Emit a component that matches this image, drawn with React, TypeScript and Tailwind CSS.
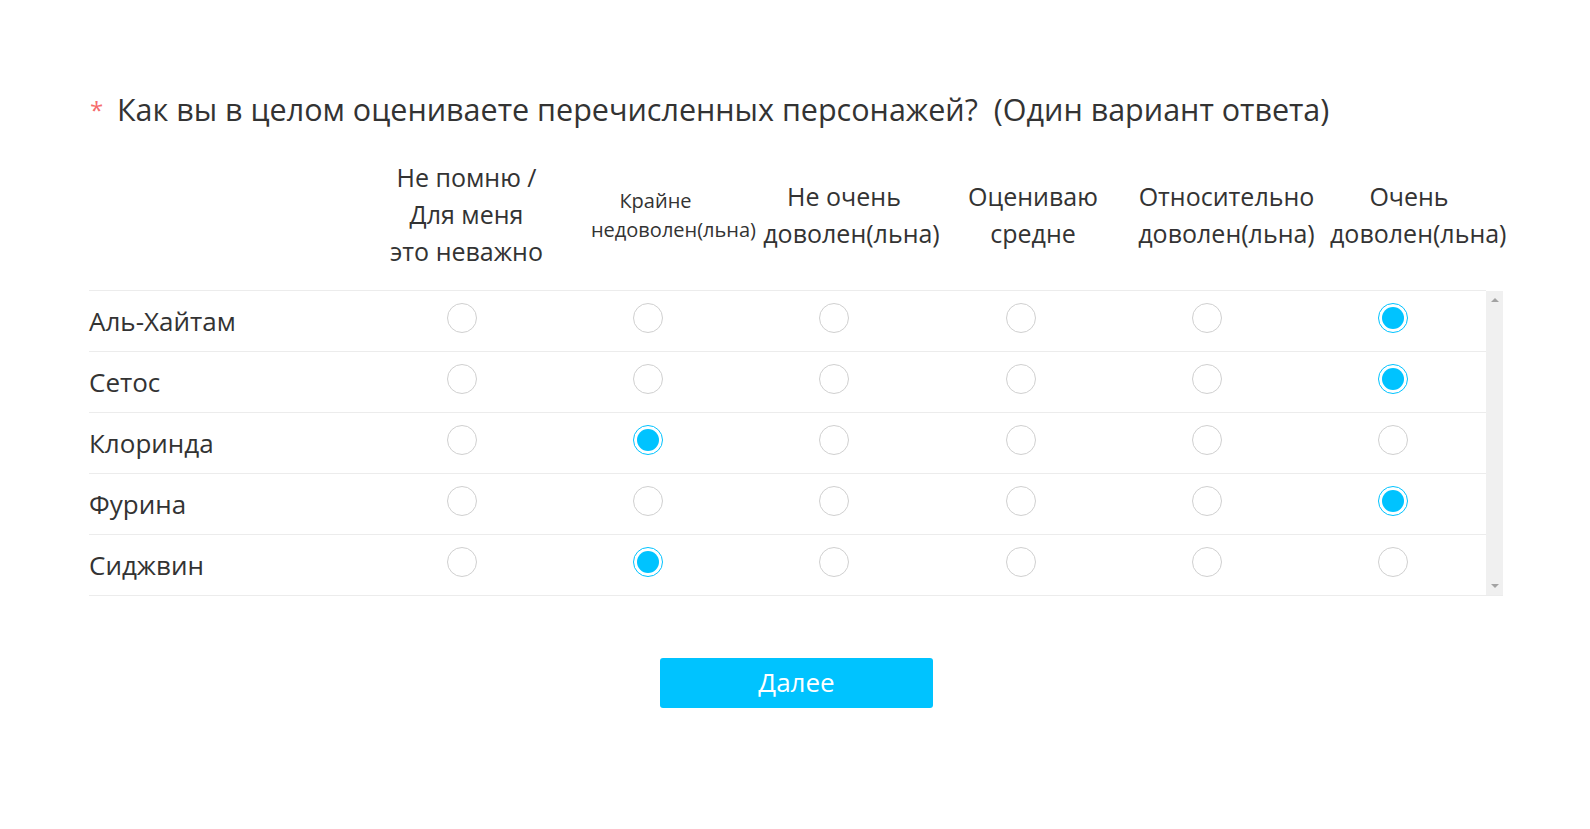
import React, { useState } from 'react';

const big = 'text-[25px] leading-[37px]';

const columns: { w: string; label: React.ReactNode }[] = [
  {
    w: 'w-[203px] pr-[2px]',
    label: (
      <div className={big}>
        <div>Не помню /</div>
        <div>Для меня</div>
        <div>это неважно</div>
      </div>
    ),
  },
  {
    w: 'w-[193px] pl-[16px]',
    label: (
      <div className="text-[20px] leading-[29px]">
        <div className="pr-[36px]">Крайне</div>
        <div>недоволен(льна)</div>
      </div>
    ),
  },
  {
    w: 'w-[179px]',
    label: (
      <div className={big}>
        <div className="pr-[15px]">Не очень</div>
        <div>доволен(льна)</div>
      </div>
    ),
  },
  {
    w: 'w-[188px] pr-[4px]',
    label: (
      <div className={big}>
        <div>Оцениваю</div>
        <div>средне</div>
      </div>
    ),
  },
  {
    w: 'w-[193px] pl-[2px]',
    label: (
      <div className={big}>
        <div>Относительно</div>
        <div>доволен(льна)</div>
      </div>
    ),
  },
  {
    w: 'w-[181px] pl-[8px]',
    label: (
      <div className={big}>
        <div className="pr-[15px]">Очень</div>
        <div>доволен(льна)</div>
      </div>
    ),
  },
];

const initialRows = [
  { name: 'Аль-Хайтам', value: 5 },
  { name: 'Сетос', value: 5 },
  { name: 'Клоринда', value: 1 },
  { name: 'Фурина', value: 5 },
  { name: 'Сиджвин', value: 1 },
];

const Radio: React.FC<{ checked: boolean; onClick: () => void }> = ({ checked, onClick }) => (
  <button
    onClick={onClick}
    className={
      checked
        ? 'w-[30px] h-[30px] rounded-full border border-[#00c3ff] bg-white flex items-center justify-center'
        : 'w-[30px] h-[30px] rounded-full border border-[#d0d0d0] bg-white'
    }
  >
    {checked && <span className="block w-[22px] h-[22px] rounded-full bg-[#00c3ff]" />}
  </button>
);

export default function App() {
  const [rows, setRows] = useState(initialRows);

  const pick = (i: number, v: number) =>
    setRows((r) => r.map((row, idx) => (idx === i ? { ...row, value: v } : row)));

  return (
    <div
      className="min-h-screen bg-white text-[#333]"
      style={{ fontFamily: '"Open Sans", "Noto Sans", sans-serif' }}
    >
      <div className="w-[1414px] ml-[89px] pt-[87px]">
        <h1 className="flex items-center text-[30.5px] leading-[45px] font-normal">
          <span className="text-[#f56c6c] text-[24px] w-[28px] pl-[1px]">*</span>
          <span>Как вы в целом оцениваете перечисленных персонажей?&nbsp; (Один вариант ответа)</span>
        </h1>

        <div className="mt-[7px] flex h-[151px] items-center">
          <div className="w-[277px] shrink-0" />
          {columns.map((c, i) => (
            <div key={i} className={`${c.w} shrink-0 text-center whitespace-nowrap`}>
              {c.label}
            </div>
          ))}
        </div>

        <div className="flex border-b border-[#ececec]">
          <div className="flex-1">
            {rows.map((row, i) => (
              <div
                key={row.name}
                className="flex h-[61px] items-center border-t border-[#ececec]"
              >
                <div className="w-[280px] text-[26px]">{row.name}</div>
                {columns.map((_, v) => (
                  <div key={v} className="w-[186.2px] flex justify-center -translate-y-[3px]">
                    <Radio checked={row.value === v} onClick={() => pick(i, v)} />
                  </div>
                ))}
              </div>
            ))}
          </div>
          <div className="w-[17px] bg-[#f0f0f0] mt-[1px] flex flex-col items-center justify-between py-[7px]">
            <span className="w-0 h-0 border-l-[4px] border-r-[4px] border-b-[4px] border-l-transparent border-r-transparent border-b-[#a3a3a3]" />
            <span className="w-0 h-0 border-l-[4px] border-r-[4px] border-t-[4px] border-l-transparent border-r-transparent border-t-[#a3a3a3]" />
          </div>
        </div>

        <div className="flex justify-center mt-[62px]">
          <button className="w-[273px] h-[50px] rounded-[3px] bg-[#00c3ff] text-white text-[26px] leading-[46px] ml-[1px] pb-[2px]">
            Далее
          </button>
        </div>
      </div>
    </div>
  );
}
